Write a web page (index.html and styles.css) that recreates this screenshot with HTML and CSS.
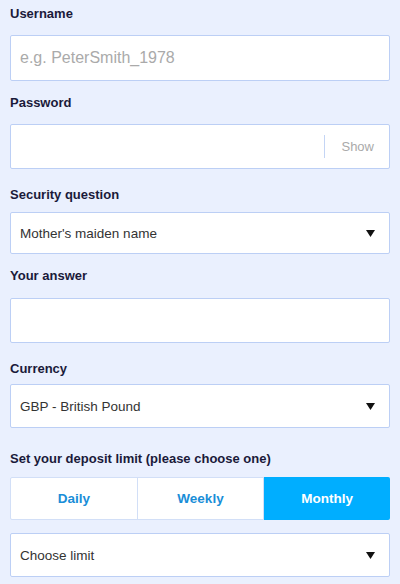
FILE: index.html
```
<!DOCTYPE html>
<html>
  <head>
    <title>Register</title>
    <meta name="viewport" content="width=device-width, initial-scale=1" />
    <link rel="stylesheet" href="styles.css">
  </head>
  <body>
    <form class="signup">
      <div class="field">
        <label class="field-label">Username</label>
        <input class="text-input" type="text" placeholder="e.g. PeterSmith_1978" />
      </div>
      <div class="field">
        <label class="field-label">Password</label>
        <div class="password-box">
          <input class="password-input" type="password" />
          <span class="divider"></span>
          <span class="show-btn">Show</span>
        </div>
      </div>
      <div class="field field-select">
        <label class="field-label">Security question</label>
        <div class="select">
          <span>Mother's maiden name</span>
          <svg class="arrow" width="9" height="7" viewBox="0 0 9 7"><polygon points="0,0 9,0 4.5,7" fill="#111"/></svg>
        </div>
      </div>
      <div class="field">
        <label class="field-label">Your answer</label>
        <input class="text-input answer" type="text" />
      </div>
      <div class="field field-select currency">
        <label class="field-label">Currency</label>
        <div class="select">
          <span>GBP - British Pound</span>
          <svg class="arrow" width="9" height="7" viewBox="0 0 9 7"><polygon points="0,0 9,0 4.5,7" fill="#111"/></svg>
        </div>
      </div>
      <div class="field deposit">
        <label class="field-label">Set your deposit limit (please choose one)</label>
        <div class="tabs">
          <button type="button" class="tab">Daily</button>
          <button type="button" class="tab">Weekly</button>
          <button type="button" class="tab active">Monthly</button>
        </div>
        <div class="select">
          <span>Choose limit</span>
          <svg class="arrow" width="9" height="7" viewBox="0 0 9 7"><polygon points="0,0 9,0 4.5,7" fill="#111"/></svg>
        </div>
      </div>
    </form>
  </body>
</html>
```

FILE: styles.css
```
*{
  box-sizing:border-box;
}
body{
  font-family: "Liberation Sans", Arial, sans-serif;
  background-color: #eaf0fe;
  margin:0;
  padding:0;
}
.signup{
  padding: 6px 10px 0;
}
.field{
  display:flex;
  flex-direction:column;
  margin-top:14px;
}
.field:first-child{
  margin-top:0;
}
.field-label{
  font-size:13px;
  font-weight:bold;
  line-height:16px;
  color:#1a1a3a;
  margin-bottom:13px;
}
.field-select{
  margin-top:18px;
}
.field-select .field-label{
  margin-bottom:9px;
}
.currency .field-label{
  margin-bottom:7px;
}
.deposit{
  margin-top:23px;
}
.deposit .field-label{
  margin-bottom:10px;
}
.text-input,
.password-box,
.select{
  width:100%;
  background:#fff;
  border:1px solid #bccff5;
  border-radius:2px;
}
.text-input{
  height:46px;
  padding:0 9px;
  font-family:inherit;
  font-size:16px;
  color:#333;
  outline:none;
}
.text-input.answer{
  height:45px;
  margin-top:1px;
}
.text-input::placeholder{
  color:#aaa;
}
.password-box{
  height:45px;
  display:flex;
  align-items:center;
}
.password-input{
  flex-grow:1;
  min-width:0;
  height:100%;
  border:none;
  background:transparent;
  outline:none;
  padding:0 9px;
}
.divider{
  width:1px;
  height:23px;
  background:#c4d5f5;
}
.show-btn{
  font-size:13px;
  color:#aaa;
  padding:0 15px 0 16px;
}
.select{
  height:42px;
  display:flex;
  align-items:center;
  justify-content:space-between;
  padding:0 14px 0 9px;
  font-size:13.5px;
  color:#333;
}
.currency .select,
.deposit .select{
  height:44px;
}
.arrow{
  display:block;
}
.tabs{
  display:flex;
  height:43px;
  margin-bottom:13px;
  background:#fff;
  border:1px solid #d2dff7;
  border-radius:2px;
}
.tab{
  flex:1;
  border:none;
  background:transparent;
  font-family:inherit;
  font-size:13.5px;
  font-weight:bold;
  color:#1a8ed8;
  padding:0;
}
.tab + .tab{
  border-left:1px solid #d2dff7;
}
.tab.active{
  background:#00aeff;
  color:#fff;
  margin:-1px -1px -1px 0;
  border-radius:0 2px 2px 0;
}
```
